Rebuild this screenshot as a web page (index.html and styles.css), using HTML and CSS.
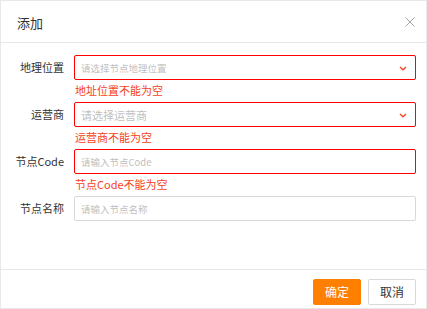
FILE: index.html
```html
<!DOCTYPE html>
<html lang="zh">
<head>
<meta charset="utf-8">
<title>添加</title>
<link rel="stylesheet" href="styles.css">
</head>
<body>
<div class="modal">
  <div class="modal-header">
    <span class="modal-title">添加</span>
    <svg class="close" width="10" height="10" viewBox="0 0 10 10"><path d="M0.5 0.5 L9.5 9.5 M9.5 0.5 L0.5 9.5" stroke="#a6a6a6" stroke-width="1" fill="none"/></svg>
  </div>
  <div class="modal-body">
    <div class="row">
      <label class="label">地理位置</label>
      <div class="field">
        <div class="control error">
          <span class="ph ph-sm">请选择节点地理位置</span>
          <svg class="chev" width="8" height="5" viewBox="0 0 8 5"><path d="M1 1 L4 3.8 L7 1" stroke="#f5421b" stroke-width="1.3" fill="none"/></svg>
        </div>
        <div class="msg">地址位置不能为空</div>
      </div>
    </div>
    <div class="row">
      <label class="label">运营商</label>
      <div class="field">
        <div class="control error">
          <span class="ph ph-lg">请选择运营商</span>
          <svg class="chev" width="8" height="5" viewBox="0 0 8 5"><path d="M1 1 L4 3.8 L7 1" stroke="#f5421b" stroke-width="1.3" fill="none"/></svg>
        </div>
        <div class="msg">运营商不能为空</div>
      </div>
    </div>
    <div class="row">
      <label class="label">节点Code</label>
      <div class="field">
        <div class="control error">
          <span class="ph ph-sm">请输入节点Code</span>
        </div>
        <div class="msg">节点Code不能为空</div>
      </div>
    </div>
    <div class="row">
      <label class="label">节点名称</label>
      <div class="field">
        <div class="control">
          <span class="ph ph-sm">请输入节点名称</span>
        </div>
      </div>
    </div>
  </div>
  <div class="modal-footer">
    <button class="btn btn-primary">确定</button>
    <button class="btn">取消</button>
  </div>
</div>
</body>
</html>
```

FILE: styles.css
```css
* { box-sizing: border-box; }
html, body { margin: 0; padding: 0; background: #fff; }
body {
  font-family: "Noto Sans CJK SC", "Noto Sans", sans-serif;
  color: #333;
}
.modal {
  width: 427px;
  height: 309px;
  border: 1px solid #e8e8e8;
  display: flex;
  flex-direction: column;
  overflow: hidden;
}
.modal-header {
  height: 42px;
  flex: none;
  border-bottom: 1px solid #e8e8e8;
  display: flex;
  align-items: center;
  justify-content: space-between;
  padding: 0 11px 0 16px;
}
.modal-title {
  font-size: 13px;
  color: #333;
  line-height: 1;
  margin-top: 1px;
}
.close { margin-top: 1px; }
.modal-body {
  flex: 1;
  padding: 12px 10px 0 0;
}
.row {
  display: grid;
  grid-template-columns: 63px 1fr;
  column-gap: 10px;
  margin-bottom: 1px;
}
.label {
  font-size: 11px;
  line-height: 25px;
  text-align: right;
  color: #333;
  white-space: nowrap;
}
.control {
  height: 25px;
  border: 1px solid #d9d9d9;
  border-radius: 2px;
  display: flex;
  align-items: center;
  justify-content: space-between;
  padding: 0 8px 0 6px;
}
.control.error { border-color: #ff0000; }
.ph { color: #bfbfbf; white-space: nowrap; }
.ph-sm { font-size: 9.5px; }
.ph-lg { font-size: 11px; }
.chev { flex: none; margin-top: 1px; }
.msg {
  font-size: 11px;
  line-height: 21px;
  color: #f5421b;
  padding-left: 1px;
}
.modal-footer {
  flex: none;
  height: 39px;
  border-top: 1px solid #e8e8e8;
  display: flex;
  justify-content: flex-end;
  align-items: flex-start;
  gap: 7px;
  padding: 9px 10px 0 0;
}
.btn {
  height: 26px;
  width: 48px;
  font-family: inherit;
  font-size: 12px;
  color: #333;
  background: #fff;
  border: 1px solid #d9d9d9;
  border-radius: 2px;
  padding: 0;
  line-height: 24px;
}
.btn-primary {
  background: #ff7f00;
  border-color: #ff7f00;
  color: #fff;
}
```
